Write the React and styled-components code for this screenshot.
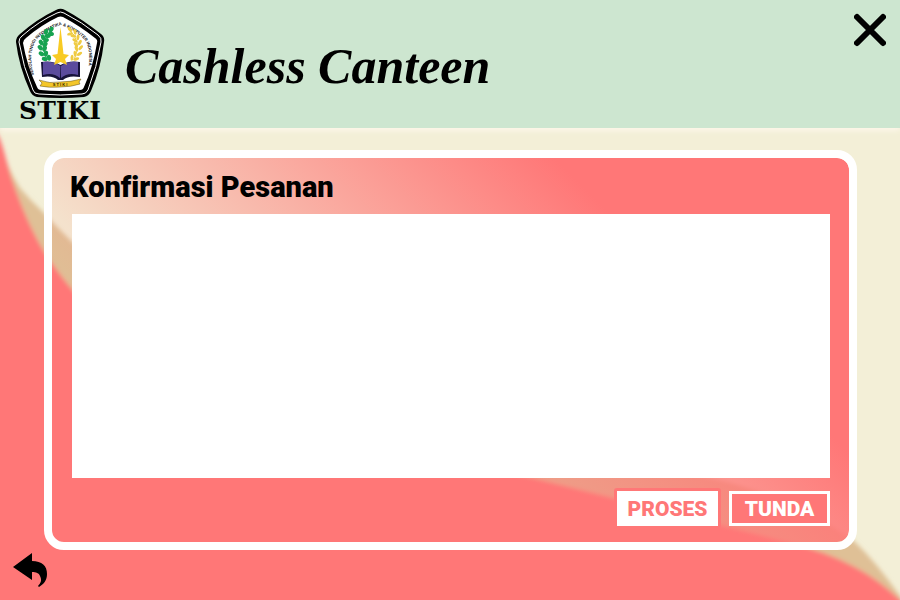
import React from "react";
import styled, { createGlobalStyle } from "styled-components";

const coral = "#ff7777";

const GlobalStyle = createGlobalStyle`
  *, *::before, *::after { box-sizing: border-box; }
  body { margin: 0; font-family: Roboto, "Liberation Sans", sans-serif; }
`;

const Page = styled.div`
  position: relative;
  isolation: isolate;
  display: flex;
  flex-direction: column;
  min-height: 100vh;
  overflow: hidden;
  background: #f3efd7;
`;

const Backdrop = styled.svg`
  position: absolute;
  inset: 0;
  z-index: -1;
  width: 100%;
  height: 100%;
`;

const Header = styled.header`
  display: flex;
  align-items: flex-start;
  gap: 20px;
  height: 128px;
  padding: 8px 14px 0 15px;
  background: #cde6d0;
  box-shadow: 0 2px 6px #fff8ee;
`;

const Brand = styled.div`
  display: flex;
  flex-direction: column;
  align-items: center;
  width: 90px;
`;

const Crest = styled.svg`
  display: block;
  width: 90px;
  height: 91px;
`;

const BrandName = styled.span`
  font: 700 25px/24px "DejaVu Serif", serif;
  color: #000;
`;

const AppTitle = styled.h1`
  flex: 1;
  margin: 26px 0 0;
  font: italic 700 50px/64px "Liberation Serif", serif;
  color: #000;
`;

const IconButton = styled.button`
  display: block;
  padding: 0;
  border: 0;
  background: none;
  color: #000;
  cursor: pointer;

  svg { display: block; }
`;

const CloseButton = styled(IconButton)`
  margin-top: 4px;
`;

const Card = styled.main`
  display: flex;
  flex: 1;
  flex-direction: column;
  margin: 22px 43px 0 44px;
  padding: 12px 19px 13px 20px;
  border: 8px solid #fff;
  border-radius: 20px;
  background: linear-gradient(45deg, rgba(255, 119, 119, 0) 22%, ${coral} 75%) padding-box;
`;

const CardTitle = styled.h2`
  margin: 0 0 10px -2px;
  font-size: 29px;
  font-weight: 900;
  line-height: 34px;
  font-variant-ligatures: none;
  color: #000;
`;

const OrderPanel = styled.section`
  flex: 1;
  min-height: 120px;
  background: #fff;
`;

const Actions = styled.div`
  display: flex;
  justify-content: flex-end;
  align-items: center;
  gap: 8px;
  margin-top: 10px;
`;

const ActionButton = styled.button`
  width: ${(p) => (p.$filled ? 107 : 101)}px;
  height: ${(p) => (p.$filled ? 41 : 35)}px;
  padding: 0;
  border: 3px solid ${(p) => (p.$filled ? coral : "#fff")};
  border-radius: ${(p) => (p.$filled ? 3 : 0)}px;
  background: ${(p) => (p.$filled ? "#fff" : coral)};
  color: ${(p) => (p.$filled ? coral : "#fff")};
  font: 900 21px/26px Roboto, sans-serif;
  cursor: pointer;
`;

const Footer = styled.footer`
  display: flex;
  align-items: flex-start;
  height: 50px;
  padding: 2px 12px;
`;

function Waves() {
  return (
    <Backdrop viewBox="0 0 900 600" preserveAspectRatio="none" aria-hidden="true">
      <defs>
        <filter id="soft" x="-5%" y="-5%" width="110%" height="110%">
          <feGaussianBlur stdDeviation="2" />
        </filter>
      </defs>
      <g filter="url(#soft)">
        <path
          d="M-20 100 L0 142 Q8 170 20 188 Q30 200 43 212 Q85 258 140 300 C280 400 480 440 620 463 C730 475 800 500 855 542 Q876 562 900 596 L920 630 H-20Z"
          fill="#dfc096"
        />
        <path
          d="M-20 100 L0 139 C6 155 8 170 13 183 C20 203 30 228 43 250 C72 295 120 350 200 390 C310 440 430 455 533 478 C620 500 700 519 783 541 C830 553 865 567 900 600 L920 630 H-20Z"
          fill={coral}
        />
      </g>
    </Backdrop>
  );
}

function Laurel({ color, x, flip }) {
  const leaves = [
    [12, 1, 70], [7, 3, 45], [4, 8, 25], [2, 13, 5], [1, 18, -10], [2, 24, -25], [5, 29, -40],
  ];
  return (
    <g transform={`translate(${x} 29) scale(${flip ? -1 : 1} 1)`} fill={color}>
      <path d="M13 0 Q-2 11 7 31" fill="none" stroke={color} strokeWidth="1" />
      {leaves.map(([cx, cy, turn]) => (
        <g key={cy} transform={`translate(${cx} ${cy}) rotate(${turn})`}>
          <ellipse cx="-1" cy="0" rx={flip ? 1.5 : 2.1} ry="3" transform="rotate(-35)" />
          <ellipse cx="4" cy="0" rx={flip ? 1.5 : 2.1} ry="3" transform="rotate(35)" />
        </g>
      ))}
    </g>
  );
}

function CampusCrest() {
  return (
    <Crest viewBox="15 8 90 91" role="img" aria-label="STIKI crest">
      <defs>
        <path id="motto" d="M34 75 C29 60 31 44 39 37 Q50 28 60.500 25 Q71 28 82 37 C90 44 92 59 85 82" />
      </defs>
      <path
        d="M56 10 Q60.500 7.500 65 10 Q82 19 101 34 Q105 37 104 42 Q101 68 91 91 Q89 96 84 97 Q60 99 37 97 Q32 96 30 91 Q19 67 16 42 Q16 37 20 34 Q37 19 56 10Z"
        fill="#000"
      />
      <path
        d="M57 13 Q60.500 11 64 13 Q82 22 98 35 Q102 38 101 42 Q97 67 88 90 Q86 94 82 94 Q60 96 39 94 Q34 94 33 90 Q23 67 19 42 Q19 38 22 36 Q39 21 57 13Z"
        fill="#000"
        stroke="#fff"
        strokeWidth="1"
      />
      <path
        d="M58 17 Q60.500 16 63 17 Q80 26 95 38 Q98 40 97 43 Q93 67 84 87 Q83 90 80 90 Q60 92 41 90 Q38 90 37 87 Q27 66 23 43 Q23 40 26 38 Q41 25 58 17Z"
        fill="#fff"
      />
      <text fontFamily="Liberation Sans, sans-serif" fontWeight="700" fontSize="4.200" fill="#111">
        <textPath href="#motto">SEKOLAH TINGGI INFORMATIKA &amp; KOMPUTER INDONESIA</textPath>
      </text>
      <Laurel color="#16a250" x={40} />
      <Laurel color="#efcb43" x={81} flip />
      <path d="M41 62 Q52 60 60.500 65 Q69 60 80 62 L80 77 Q68 75 63 80 H58 Q53 75 42 77Z" fill="#17133a" />
      <path d="M43 62 Q53 61 60.500 66 L60 78 Q53 72 43 75Z M78 62 Q68 61 61 66 L61 78 Q68 72 78 75Z" fill="#5b4b9d" />
      <path
        d="M60.500 27 L63.500 54 L69 55 L65 59 L67 65 L60.500 62 L54 65 L56 59 L52 55 L57.500 54Z"
        fill="#f8cb24"
      />
      <path
        d="M39 80 Q50 84 60 82 Q71 82 81 79 L79 82 L80 84 Q71 87 60 87 Q49 88 40 86 L42 83Z"
        fill="#f4c629"
        stroke="#5c4a10"
        strokeWidth="0.500"
      />
      <text fontFamily="Liberation Sans, sans-serif" fontWeight="700" fontSize="4" textAnchor="middle" x="60" y="86" fill="#332a00">
        S T I K I
      </text>
    </Crest>
  );
}

export default function App() {
  return (
    <>
      <GlobalStyle />
      <Page>
        <Waves />
        <Header>
          <Brand>
            <CampusCrest />
            <BrandName>STIKI</BrandName>
          </Brand>
          <AppTitle>Cashless Canteen</AppTitle>
          <CloseButton type="button" aria-label="Tutup">
            <svg width="32" height="36" viewBox="0 0 32 36" fill="none" stroke="currentColor" strokeWidth="6" strokeLinecap="round">
              <path d="M3 5 L29 31 M29 5 L3 31" />
            </svg>
          </CloseButton>
        </Header>
        <Card>
          <CardTitle id="order-title">Konfirmasi Pesanan</CardTitle>
          <OrderPanel aria-labelledby="order-title" />
          <Actions>
            <ActionButton type="button" $filled>PROSES</ActionButton>
            <ActionButton type="button">TUNDA</ActionButton>
          </Actions>
        </Card>
        <Footer>
          <IconButton type="button" aria-label="Kembali">
            <svg width="36" height="36" viewBox="0 0 36 36" fill="currentColor">
              <path d="M1 15 L20 1 V9 C30 9 35 14 35 22 C35 28 32 32 27 35 L26 34 C29 31 30 28 28 24 C27 21 24 20 20 20 V28Z" />
            </svg>
          </IconButton>
        </Footer>
      </Page>
    </>
  );
}
